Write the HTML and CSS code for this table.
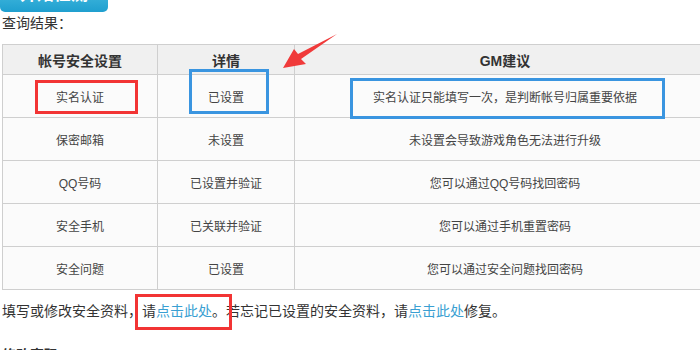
FILE: index.html
```html
<!DOCTYPE html>
<html>
	<head>
		<meta charset="utf-8">
		<title>帐号安全查询</title>
		<link rel="stylesheet" href="styles.css">
	</head>
	<body>
		<div id="page">
			<div class="btnCheck">开始检测</div>
			<div class="resultTitle">查询结果：</div>

			<table class="safeTable">
				<tr>
					<th class="c1">帐号安全设置</th>
					<th class="c2">详情</th>
					<th class="c3">GM建议</th>
				</tr>
				<tr>
					<td>实名认证</td>
					<td>已设置</td>
					<td>实名认证只能填写一次，是判断帐号归属重要依据</td>
				</tr>
				<tr>
					<td>保密邮箱</td>
					<td>未设置</td>
					<td>未设置会导致游戏角色无法进行升级</td>
				</tr>
				<tr>
					<td>QQ号码</td>
					<td>已设置并验证</td>
					<td>您可以通过QQ号码找回密码</td>
				</tr>
				<tr>
					<td>安全手机</td>
					<td>已关联并验证</td>
					<td>您可以通过手机重置密码</td>
				</tr>
				<tr>
					<td>安全问题</td>
					<td>已设置</td>
					<td>您可以通过安全问题找回密码</td>
				</tr>
			</table>

			<div class="tips">填写或修改安全资料，请<a href="#">点击此处</a>。若忘记已设置的安全资料，请<a href="#">点击此处</a>修复。</div>
			<div class="nextTitle">修改密码</div>

			<!-- marks drawn over the table -->
			<div class="mark red m1"></div>
			<div class="mark blue m2"></div>
			<div class="mark blue m3"></div>
			<div class="mark red m4"></div>
			<svg class="arrow" width="60" height="40" viewBox="280 32 60 40">
				<polygon points="283,68 294,49 298,54 337,34 301,59 306,64" fill="#f03a3a"/>
			</svg>
		</div>
	</body>
</html>
```
FILE: styles.css
```css
html, body {
	overflow: hidden;
}

body {
	margin: 0px;
	padding: 0px;
	background: #fff;
	color: #333;
	font-family: 'Liberation Sans', 'Noto Sans CJK SC', sans-serif;
	font-size: 14px;
}

#page {
	display: flow-root;
	position: relative;
	width: 720px;
	padding-left: 2px;
}

.btnCheck {
	width: 108px;
	height: 34px;
	margin-top: -22px;
	margin-left: -2px;
	border-radius: 5px;
	background: linear-gradient(#55c6e6, #1f9fcf);
	color: #fff;
	font-size: 17px;
	font-weight: bold;
	line-height: 34px;
	text-align: center;
}

.resultTitle {
	margin-top: 1px;
	line-height: 20px;
}

.safeTable {
	margin-top: 11px;
	width: 714px;
	border-collapse: collapse;
	table-layout: fixed;
}

.safeTable th,
.safeTable td {
	border: 1px solid #cfcfcf;
	text-align: center;
	padding: 0px;
}

.safeTable th {
	height: 29px;
	background: #f0f0f0;
	font-size: 14px;
	font-weight: bold;
	color: #333;
}

.safeTable td {
	height: 42px;
	background: #fbfbfb;
	font-size: 12px;
	color: #444;
}

.safeTable .c1 { width: 154px; }
.safeTable .c2 { width: 136px; }

.tips {
	margin-top: 10px;
	line-height: 22px;
	color: #333;
}

.tips a {
	color: #3a9fd2;
	text-decoration: none;
}

.nextTitle {
	margin-top: 22px;
	line-height: 22px;
	font-weight: bold;
}

.mark {
	position: absolute;
	box-sizing: border-box;
	border: 3px solid;
}

.mark.red { border-color: #f23434; }
.mark.blue { border-color: #3a95e0; }

.m1 { left: 35px; top: 80px; width: 103px; height: 34px; }
.m2 { left: 189px; top: 69px; width: 80px; height: 45px; }
.m3 { left: 350px; top: 78px; width: 315px; height: 41px; }
.m4 { left: 135px; top: 294px; width: 97px; height: 36px; }

.arrow {
	position: absolute;
	left: 280px;
	top: 32px;
}
```
